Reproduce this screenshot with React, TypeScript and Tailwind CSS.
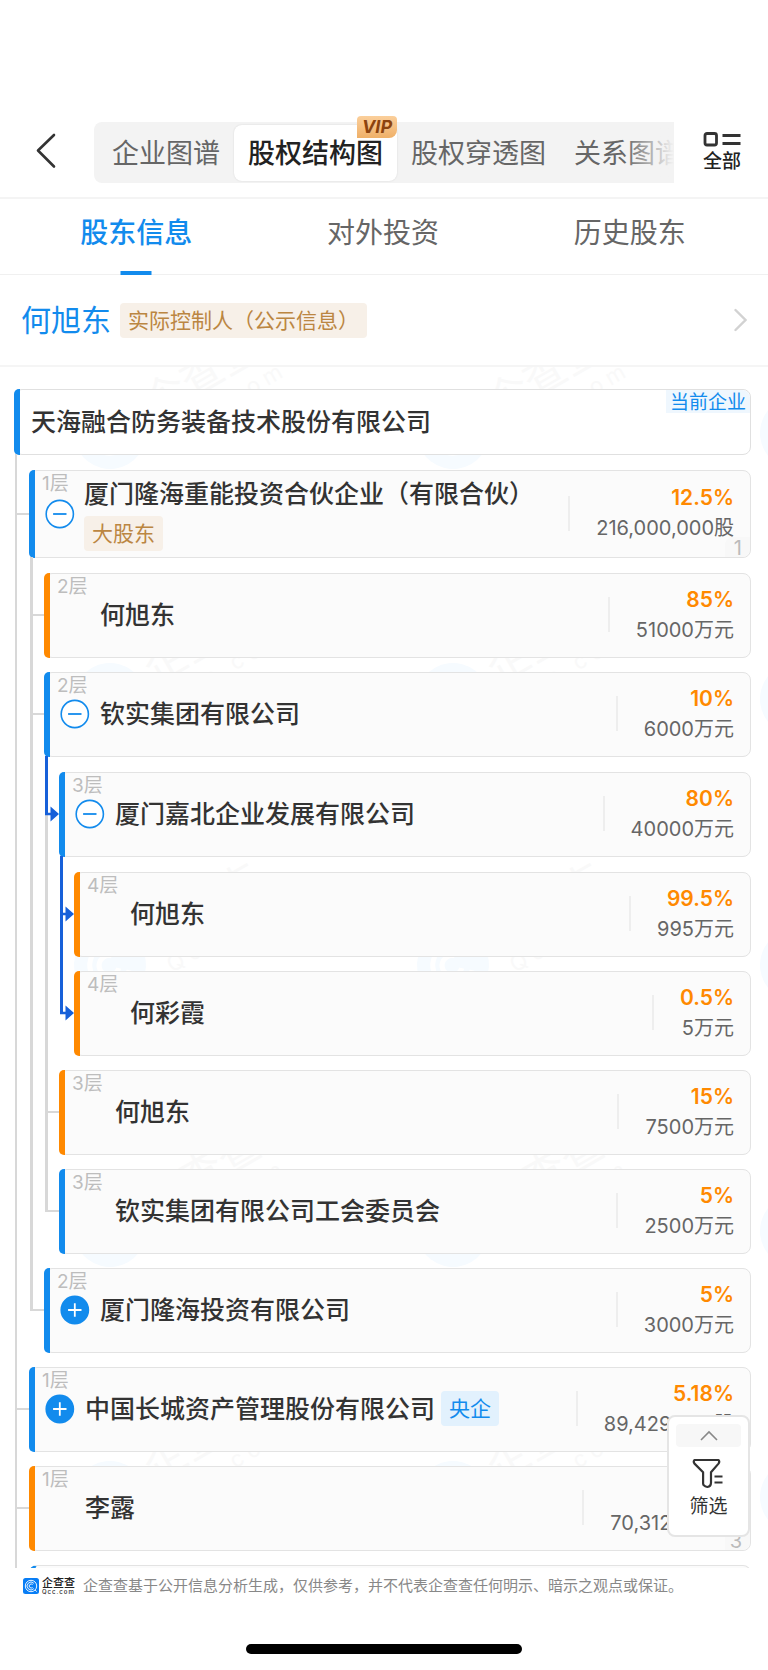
import type { ReactNode } from "react";

type Tone = "blue" | "orange";

interface Holder {
  name: string;
  level: 1 | 2 | 3 | 4;
  tone: Tone;
  percent: string;
  amount: string;
  badge?: string;
  tag?: { text: string; kind: "major" | "state" };
  toggle?: "open" | "closed";
  highlighted?: boolean;
  children?: Holder[];
}

const holders: Holder[] = [
  {
    name: "厦门隆海重能投资合伙企业（有限合伙）",
    level: 1,
    tone: "blue",
    percent: "12.5%",
    amount: "216,000,000股",
    badge: "1",
    tag: { text: "大股东", kind: "major" },
    toggle: "open",
    children: [
      { name: "何旭东", level: 2, tone: "orange", percent: "85%", amount: "51000万元" },
      {
        name: "钦实集团有限公司",
        level: 2,
        tone: "blue",
        percent: "10%",
        amount: "6000万元",
        toggle: "open",
        children: [
          {
            name: "厦门嘉北企业发展有限公司",
            level: 3,
            tone: "blue",
            percent: "80%",
            amount: "40000万元",
            toggle: "open",
            highlighted: true,
            children: [
              { name: "何旭东", level: 4, tone: "orange", percent: "99.5%", amount: "995万元", highlighted: true },
              { name: "何彩霞", level: 4, tone: "orange", percent: "0.5%", amount: "5万元", highlighted: true },
            ],
          },
          { name: "何旭东", level: 3, tone: "orange", percent: "15%", amount: "7500万元" },
          { name: "钦实集团有限公司工会委员会", level: 3, tone: "blue", percent: "5%", amount: "2500万元" },
        ],
      },
      {
        name: "厦门隆海投资有限公司",
        level: 2,
        tone: "blue",
        percent: "5%",
        amount: "3000万元",
        toggle: "closed",
      },
    ],
  },
  {
    name: "中国长城资产管理股份有限公司",
    level: 1,
    tone: "blue",
    percent: "5.18%",
    amount: "89,429,000股",
    tag: { text: "央企", kind: "state" },
    toggle: "closed",
  },
  {
    name: "李露",
    level: 1,
    tone: "orange",
    percent: "4.07%",
    amount: "70,312,608股",
    badge: "3",
  },
];

function Toggle({ state, name }: { state: "open" | "closed"; name: string }) {
  const open = state === "open";
  return (
    <button type="button" aria-label={`${open ? "收起" : "展开"} ${name}`} aria-expanded={open} className="block h-[30px] w-[30px]">
      <svg viewBox="0 0 30 30" className="h-[30px] w-[30px]" fill="none">
        <circle cx="14.8" cy="15" r="13.6" fill={open ? "#fff" : "#128bed"} stroke="#128bed" strokeWidth="1.6" />
        <path d={open ? "M8.1 15h13.4" : "M8.1 15h13.4M14.8 8.3v13.4"} stroke={open ? "#128bed" : "#fff"} strokeWidth="1.8" />
      </svg>
    </button>
  );
}

function Connector({ item, last, continuesBlue }: { item: Holder; last: boolean; continuesBlue: boolean }) {
  return (
    <>
      <span
        className={`absolute -left-[14px] -top-4 bg-[#d8d8d8] ${item.level > 1 ? "w-[3px]" : "w-[2px]"} ${last ? "h-[59px]" : "bottom-0"}`}
      />
      {item.highlighted ? (
        <>
          <span className={`absolute -left-[14px] -top-4 w-[3px] bg-[#1760d9] ${continuesBlue ? "bottom-0" : "h-[59px]"}`} />
          <svg viewBox="0 0 14 16" className="absolute -left-[14px] top-[34px] h-4 w-[14px]">
            <path d="M0 6.700h5.500V0.500L14 8 5.500 15.500V9.300H0z" fill="#1760d9" />
          </svg>
        </>
      ) : (
        <span
          className={`absolute -left-3 h-[2px] w-3 bg-[#d8d8d8] ${item.tag?.kind === "major" ? "top-[43px]" : "top-[41px]"}`}
        />
      )}
    </>
  );
}

function HolderCard({ item }: { item: Holder }) {
  const major = item.tag?.kind === "major";
  return (
    <article
      className={`relative flex rounded-lg border border-[#e3e3e3] bg-[#fbfbfb] ${major ? "h-[88px]" : "h-[85px] pb-[2px]"}`}
    >
      <span
        className={`absolute -bottom-px -left-px -top-px w-[6px] rounded-l-[5px] ${item.tone === "blue" ? "bg-[#128bed]" : "bg-[#ff8900]"}`}
      />
      <span className="absolute left-3 top-px text-[19px] leading-6 text-[#bdbdbd]">{item.level}层</span>
      <div className={`ml-[15px] flex shrink-0 items-center ${major ? "w-[39px]" : "w-10"}`}>
        {item.toggle && <Toggle state={item.toggle} name={item.name} />}
      </div>
      <div className={`flex min-w-0 flex-1 ${major ? "flex-col items-start gap-1 pt-[5px]" : "items-center gap-[6px]"}`}>
        <h3 className="whitespace-nowrap text-[25px] font-medium leading-9 text-[#333]">{item.name}</h3>
        {item.tag && (
          <span
            className={`rounded-[4px] px-2 text-[21px] leading-[35px] ${major ? "bg-[#f7f0e8] text-[#bb8642]" : "bg-[#e2f1fd] text-[#128bed]"}`}
          >
            {item.tag.text}
          </span>
        )}
      </div>
      <div className={`flex shrink-0 items-center ${major ? "pb-[2px]" : ""}`}>
        <span className="h-[35px] w-[2px] bg-[#eee]" />
        <div className="flex flex-col items-end pl-[26px] pr-4">
          <strong className="text-[21px] font-semibold leading-[30px] text-[#ff8900]">{item.percent}</strong>
          <span className="text-[20px] leading-[30px] text-[#666]">{item.amount}</span>
        </div>
      </div>
      {item.badge && (
        <span className="absolute bottom-0 right-0 h-5 w-[25px] rounded-br-lg rounded-tl-lg bg-[#f8f8f8] pr-2 text-right text-[20px] leading-[22px] text-[#bbb]">
          {item.badge}
        </span>
      )}
    </article>
  );
}

function Branch({ items, keepGoing = false }: { items: Holder[]; keepGoing?: boolean }) {
  return (
    <ul className="ml-[15px] pt-px">
      {items.map((item, i) => (
        <li key={item.name + i} className="relative pt-[14px]">
          {item.children && (keepGoing || i < items.length - 1) && (
            <span
              className={`absolute -left-[14px] bottom-0 bg-[#d8d8d8] ${item.level > 1 ? "w-[3px]" : "w-[2px]"} ${item.highlighted ? "top-[58px]" : "top-0"}`}
            />
          )}
          <div className="relative">
            <Connector
              item={item}
              last={i === items.length - 1 && !keepGoing}
              continuesBlue={!!items[i + 1]?.highlighted}
            />
            <HolderCard item={item} />
          </div>
          {item.children && <Branch items={item.children} />}
        </li>
      ))}
    </ul>
  );
}

function Mark() {
  return (
    <svg viewBox="0 0 300 190" className="ml-10 h-[190px] w-[300px]" aria-hidden="true">
      <g transform="rotate(-30 70 120)">
        <circle cx="70" cy="120" r="36" fill="#f6fbff" />
        <path d="M84 106a20 20 0 1 0 0 28M76 113a10 10 0 1 0 0 14" fill="none" stroke="#fff" strokeWidth="5" />
        <text x="116" y="130" fontSize="42" fill="#f9f9f9">企查查</text>
        <text x="120" y="158" fontSize="22" letterSpacing="6" fill="#f9f9f9">Qcc.com</text>
      </g>
    </svg>
  );
}

function Watermarks() {
  return (
    <div aria-hidden="true" className="pointer-events-none absolute inset-0 -z-10 overflow-hidden">
      <div className="-mt-[54px] grid grid-cols-[343px_343px_343px] gap-y-[76px]">
        {Array.from({ length: 15 }, (_, i) => (
          <Mark key={i} />
        ))}
      </div>
    </div>
  );
}

function GraphTab({ children, active }: { children: ReactNode; active?: boolean }) {
  return (
    <button
      type="button"
      aria-pressed={!!active}
      className={`h-[56px] shrink-0 rounded-lg px-[14px] text-[27px] leading-[58px] ${active ? "bg-white font-medium text-[#222] shadow-[0_0_2px_rgba(0,0,0,0.12)]" : "text-[#666]"}`}
    >
      {children}
    </button>
  );
}

export default function App() {
  return (
    <div className="flex min-h-screen flex-col bg-white font-[Inter,'Noto_Sans_CJK_SC',sans-serif] text-[#333]">
      <header className="flex items-center border-b-2 border-[#f4f4f4] pb-[14px] pt-[122px]">
        <button type="button" aria-label="返回" className="mb-1 ml-[34px] mr-[34px] w-[26px] shrink-0">
          <svg viewBox="0 0 26 38" className="h-[38px] w-[26px]" fill="none" stroke="#333" strokeWidth="2.6" strokeLinecap="round" strokeLinejoin="round">
            <path d="M20 3 4 18.500 20 34.500" />
          </svg>
        </button>
        <nav aria-label="图谱" className="relative min-w-0 flex-1">
          <div className="flex h-[61px] items-center overflow-hidden rounded-l-lg bg-[#f3f3f3] pl-1">
            <GraphTab>企业图谱</GraphTab>
            <GraphTab active>股权结构图</GraphTab>
            <GraphTab>股权穿透图</GraphTab>
            <GraphTab>关系图谱</GraphTab>
          </div>
          <span className="absolute inset-y-0 right-0 w-[50px] bg-linear-to-r from-[#f3f3f3]/0 to-[#f3f3f3]" />
          <span className="absolute -top-[6px] left-[263px] h-[22px] w-10 rounded-[4px] rounded-br-lg rounded-bl-none bg-linear-to-b from-[#fbcf9b] to-[#efb068] text-center text-[18px] font-bold italic leading-[22px] text-[#8c430f]">
            VIP
          </span>
        </nav>
        <button type="button" className="ml-[20px] mr-[18px] flex w-[56px] shrink-0 flex-col items-center gap-[2px] text-[19px] font-medium leading-6 text-[#222]">
          <svg viewBox="0 0 38 16" className="h-4 w-[38px]" fill="none" stroke="#333" strokeWidth="2.8">
            <rect x="2" y="1.500" width="11.500" height="11.500" rx="2" />
            <path d="M19.500 3.500h18M19.500 11.500h18" />
          </svg>
          全部
        </button>
      </header>

      <nav aria-label="股权信息" className="grid h-[76px] grid-cols-3 border-b border-[#f0f0f0] pl-[13px] pr-[15px]">
        {["股东信息", "对外投资", "历史股东"].map((label, i) => (
          <a
            key={label}
            href="#"
            aria-current={i === 0 ? "page" : undefined}
            className={`relative text-center text-[28px] leading-[69px] ${i === 0 ? "font-medium text-[#128bed]" : "text-[#666]"}`}
          >
            {label}
            {i === 0 && <span className="absolute -bottom-px left-1/2 h-1 w-[31px] -translate-x-1/2 bg-[#128bed]" />}
          </a>
        ))}
      </nav>

      <a href="#" className="flex h-[92px] items-center border-b-2 border-[#f5f5f5] px-[21px]">
        <span className="text-[30px] leading-10 text-[#128bed]">何旭东</span>
        <span className="ml-[9px] rounded-[4px] bg-[#f7f0e8] px-2 text-[21px] leading-[35px] text-[#bb8642]">
          实际控制人（公示信息）
        </span>
        <svg viewBox="0 0 13 24" className="ml-auto h-6 w-[13px]" fill="none" stroke="#d2d2d2" strokeWidth="2.4" strokeLinecap="round">
          <path d="M1.500 2 11.500 12 1.500 22" />
        </svg>
      </a>

      <main className="relative isolate h-[1201px] overflow-hidden pl-[14px] pr-[17px] pt-[22px]">
        <Watermarks />
        <article className="relative flex h-[66px] items-center rounded-lg border border-[#e0e0e0] bg-white pl-4">
          <span className="absolute -bottom-px -left-px -top-px w-[6px] rounded-l-[5px] bg-[#128bed]" />
          <h2 className="text-[25px] font-medium leading-9 text-[#333]">天海融合防务装备技术股份有限公司</h2>
          <span className="absolute right-0 top-0 rounded-tr-lg bg-[#eff7fe] px-1 pt-[2px] text-[19px] leading-[21px] text-[#128bed]">
            当前企业
          </span>
        </article>
        <Branch items={holders} keepGoing />
        <div className="relative ml-[15px] pt-[14px]">
          <span className="absolute -left-[14px] top-0 h-5 w-[2px] bg-[#d8d8d8]" />
          <div className="h-[85px] rounded-lg border border-l-[6px] border-[#e3e3e3] border-l-[#128bed] bg-[#fbfbfb]" />
        </div>
        <aside className="absolute bottom-[31px] right-[18px] flex h-[122px] w-[83px] flex-col items-center rounded-lg border-2 border-[#e5e5e5] bg-white pt-[7px]">
          <button type="button" aria-label="展开工具" className="flex h-[23px] w-[65px] items-center justify-center rounded-[4px] bg-[#f7f7f7]">
            <svg viewBox="0 0 18 11" className="h-[11px] w-[18px]" fill="none" stroke="#888" strokeWidth="1.6">
              <path d="M1 10 9 2l8 8" />
            </svg>
          </button>
          <button type="button" className="mt-[11px] flex flex-col items-center gap-1 text-[19px] leading-[26px] text-[#333]">
            <svg viewBox="0 0 32 32" className="h-8 w-8" fill="none" stroke="#333" strokeWidth="2.2" strokeLinejoin="round">
              <path d="M2.500 2h24q1.500 1.600 0 3.600l-7.500 8.600V24.500q0 4-3.600 4.500-2.400-.3-3.400-1.600-.9-.7-.9-2V14.200L2.500 5.600Q1 3.600 2.500 2Z" />
              <path d="M22.500 18.500h8M22.500 24.500h8" />
            </svg>
            筛选
          </button>
        </aside>
      </main>

      <footer className="flex flex-col">
        <div className="flex h-9 items-center pl-[23px]">
          <svg viewBox="0 0 16 16" className="h-4 w-4" role="img" aria-label="企查查">
            <rect width="16" height="16" rx="2.500" fill="#087df5" />
            <g fill="none" stroke="#fff" strokeWidth="0.9">
              <circle cx="8" cy="8" r="5.700" />
              <path d="M10.800 10.700a3.900 3.900 0 1 1 0-5.400" />
              <path d="M9.600 9.400a2 2 0 1 1 0-2.800M12 12l1.800 1.600" />
            </g>
          </svg>
          <span className="ml-[3px] flex w-[33px] flex-col text-[#222]">
            <span className="text-[11px] font-medium leading-[11px]">企查查</span>
            <span className="text-[6px] font-medium leading-[6px] tracking-[1px]">Qcc.com</span>
          </span>
          <p className="ml-2 whitespace-nowrap text-[15px] leading-6 text-[#888]">
            企查查基于公开信息分析生成，仅供参考，并不代表企查查任何明示、暗示之观点或保证。
          </p>
        </div>
        <div className="mx-auto mt-[40px] h-[10px] w-[276px] rounded-full bg-black" />
      </footer>
    </div>
  );
}
